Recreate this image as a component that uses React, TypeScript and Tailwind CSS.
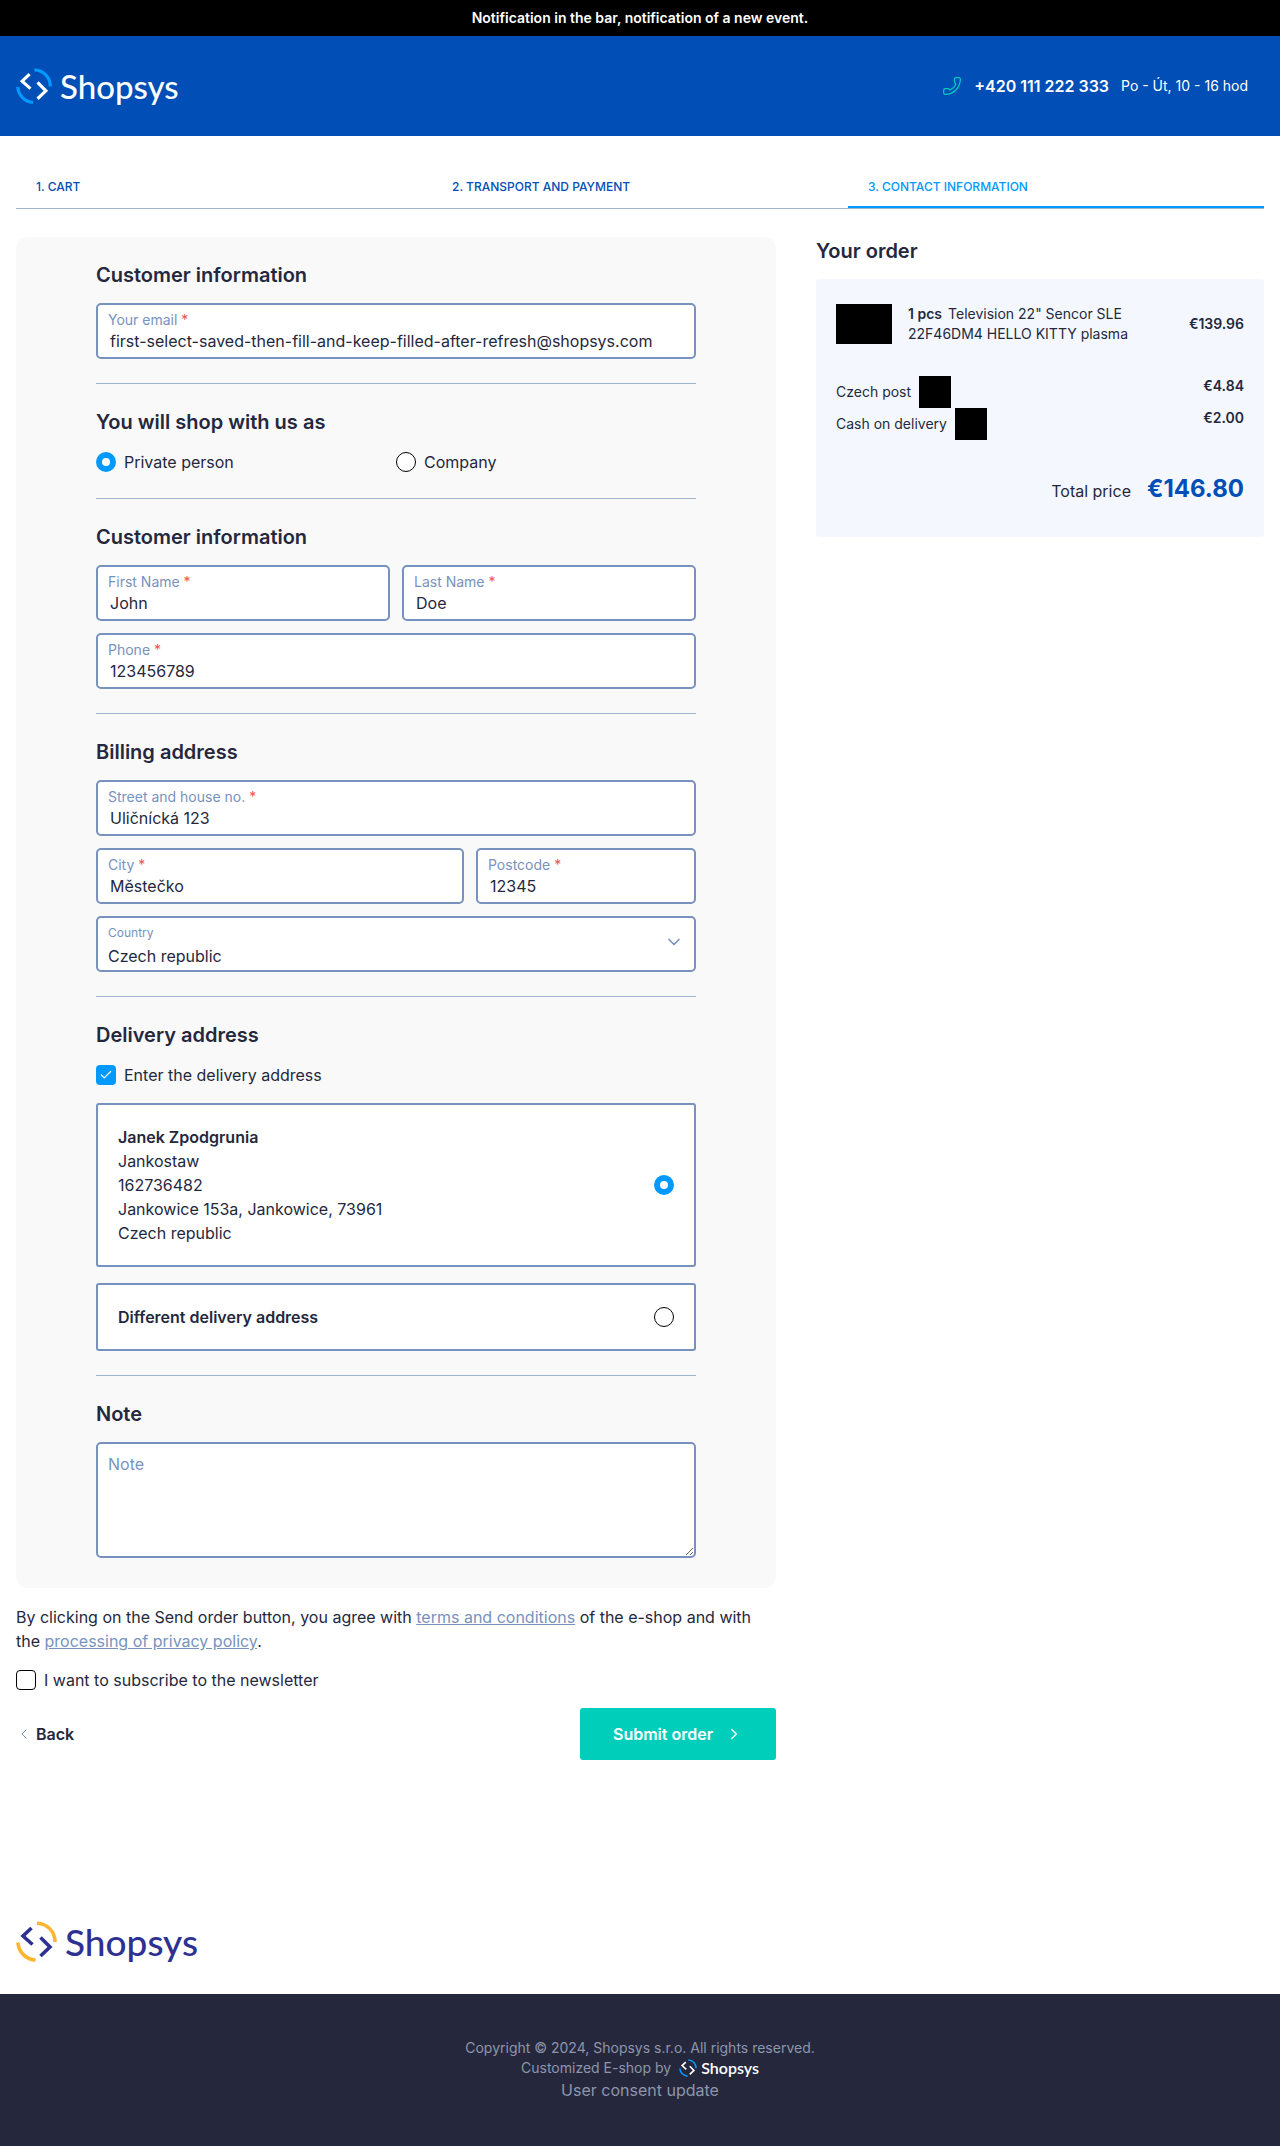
import React from 'react';
import { ChevronDown, ChevronLeft, ChevronRight, Check, Phone } from 'lucide-react';

function LogoMark({ arc, chevron, className }: { arc: string; chevron: string; className: string }) {
  return (
    <svg viewBox="0 0 41 41" fill="none" className={className}>
      <path d="M21 2.2 A18.4 18.4 0 0 1 39 21" strokeWidth="3.6" className={arc} />
      <path d="M2 21.5 A18.4 18.4 0 0 0 19.5 39" strokeWidth="3.6" className={arc} />
      <path d="M15.5 7 L7 15 L16.5 23.5" strokeWidth="3.6" className={chevron} />
      <path d="M24.5 16.5 L34 26 L24.5 35" strokeWidth="3.6" className={chevron} />
    </svg>
  );
}

function Field({ label, value, required = true, className = '' }: { label: string; value: string; required?: boolean; className?: string }) {
  return (
    <div className={`h-14 border-2 border-[#7892BE] rounded-[5px] bg-white pt-1.5 pl-2.5 ${className}`}>
      <div className="text-sm leading-[18px] text-[#7892BE]">
        {label} {required && <span className="text-[#EC5353]">*</span>}
      </div>
      <div className="pl-0.5 text-base leading-6 text-[#25283D] whitespace-nowrap">{value}</div>
    </div>
  );
}

function Radio({ checked = false }: { checked?: boolean }) {
  return checked ? (
    <span className="block w-5 h-5 shrink-0 rounded-full bg-white border-[6px] border-[#0099FF]" />
  ) : (
    <span className="block w-5 h-5 shrink-0 rounded-full bg-white border border-black" />
  );
}

function Section({ title, children, last = false }: { title: string; children: React.ReactNode; last?: boolean }) {
  return (
    <section className={last ? '' : 'pb-6 mb-6 border-b border-[#A4B4D0]'}>
      <h2 className="h-7 mb-3.5 text-xl leading-7 font-semibold text-[#25283D]">{title}</h2>
      {children}
    </section>
  );
}

export default function App() {
  return (
    <div className="font-[Inter,sans-serif] text-[#25283D] bg-white">
      <div className="h-9 bg-black flex items-center justify-center text-sm font-semibold text-white">
        Notification in the bar, notification of a new event.
      </div>

      <header className="h-[100px] bg-[#004EB6] flex items-center justify-between pl-4 pr-8">
        <div className="flex items-center gap-2">
          <LogoMark arc="stroke-[#0099FF]" chevron="stroke-white" className="w-9 h-9" />
          <span className="font-[Lato,sans-serif] font-medium text-[33px] leading-none text-white">Shopsys</span>
        </div>
        <div className="flex items-center text-white">
          <Phone size={20} strokeWidth={1.5} className="text-[#00CEBA] -scale-x-100" />
          <span className="ml-3 text-base font-semibold">+420 111 222 333</span>
          <span className="ml-3 text-sm">Po - Út, 10 - 16 hod</span>
        </div>
      </header>

      <main className="px-4">
        <div className="pt-10 grid grid-cols-3 border-b border-[#A4B4D0] text-xs font-medium uppercase">
          <div className="pl-5 h-[32px] leading-[22px] text-[#004EB6]">1. Cart</div>
          <div className="pl-5 h-[32px] leading-[22px] text-[#004EB6]">2. Transport and payment</div>
          <div className="pl-5 h-[32px] leading-[22px] text-[#0099FF] border-b-2 border-[#0099FF]">3. Contact information</div>
        </div>

        <div className="mt-7 flex gap-10 items-start">
          <div className="w-[760px] shrink-0">
            <div className="bg-[#F9F9FA] rounded-xl pt-6 pb-[30px] px-20">
              <Section title="Customer information">
                <Field label="Your email" value="first-select-saved-then-fill-and-keep-filled-after-refresh@shopsys.com" />
              </Section>

              <Section title="You will shop with us as">
                <div className="grid grid-cols-2 h-6">
                  <label className="flex items-center gap-2 text-base"><Radio checked />Private person</label>
                  <label className="flex items-center gap-2 text-base"><Radio />Company</label>
                </div>
              </Section>

              <Section title="Customer information">
                <div className="flex flex-col gap-3">
                  <div className="grid grid-cols-2 gap-3">
                    <Field label="First Name" value="John" />
                    <Field label="Last Name" value="Doe" />
                  </div>
                  <Field label="Phone" value="123456789" />
                </div>
              </Section>

              <Section title="Billing address">
                <div className="flex flex-col gap-3">
                  <Field label="Street and house no." value="Uličnícká 123" />
                  <div className="flex gap-3">
                    <Field label="City" value="Městečko" className="flex-1" />
                    <Field label="Postcode" value="12345" className="w-[220px]" />
                  </div>
                  <div className="relative h-14 border-2 border-[#7892BE] rounded-[5px] bg-white pl-2.5 pt-1.5">
                    <div className="text-xs leading-[18px] text-[#7892BE]">Country</div>
                    <div className="mt-0.5 text-base leading-6">Czech republic</div>
                    <ChevronDown size={20} strokeWidth={2} className="absolute right-2.5 top-[14px] text-[#7892BE]" />
                  </div>
                </div>
              </Section>

              <Section title="Delivery address">
                <label className="flex items-center gap-2 h-6 mb-4 text-base">
                  <span className="flex items-center justify-center w-5 h-5 rounded bg-[#0099FF]">
                    <Check size={14} strokeWidth={2} className="text-white" />
                  </span>
                  Enter the delivery address
                </label>
                <div className="flex items-center justify-between h-[164px] border-2 border-[#7892BE] rounded-[3px] bg-white px-5 mb-4">
                  <div className="text-base leading-6">
                    <div className="font-semibold">Janek Zpodgrunia</div>
                    <div>Jankostaw</div>
                    <div>162736482</div>
                    <div>Jankowice 153a, Jankowice, 73961</div>
                    <div>Czech republic</div>
                  </div>
                  <Radio checked />
                </div>
                <div className="flex items-center justify-between h-[68px] border-2 border-[#7892BE] rounded-[3px] bg-white px-5">
                  <div className="text-base font-semibold">Different delivery address</div>
                  <Radio />
                </div>
              </Section>

              <Section title="Note" last>
                <textarea
                  placeholder="Note"
                  className="block w-full h-[116px] border-2 border-[#7892BE] rounded-[5px] bg-white px-2.5 py-2 text-base leading-6 placeholder:text-[#7892BE]"
                />
              </Section>
            </div>

            <p className="mt-[17px] text-base leading-6">
              By clicking on the Send order button, you agree with{' '}
              <a className="text-[#7892BE] underline">terms and conditions</a> of the e-shop and with the{' '}
              <a className="text-[#7892BE] underline">processing of privacy policy</a>.
            </p>

            <label className="mt-[15px] flex items-center gap-2 h-6 text-base">
              <span className="block w-5 h-5 rounded border border-black bg-white" />
              I want to subscribe to the newsletter
            </label>

            <div className="mt-4 flex items-center justify-between">
              <a className="flex items-center gap-1 text-base font-semibold">
                <ChevronLeft size={16} strokeWidth={1.5} className="text-[#7892BE]" />
                Back
              </a>
              <button className="flex items-center justify-center gap-3 w-[196px] h-[52px] rounded-[3px] bg-[#00CEBA] text-base font-semibold text-white">
                Submit order
                <ChevronRight size={18} strokeWidth={2} />
              </button>
            </div>
          </div>

          <aside className="w-[448px] shrink-0">
            <h2 className="h-7 mb-3.5 text-xl leading-7 font-semibold">Your order</h2>
            <div className="h-[258px] bg-[#F4F8FE] rounded px-5 pt-[25px]">
              <div className="flex items-center">
                <div className="w-14 h-10 bg-black shrink-0" />
                <div className="ml-4 flex-1 text-sm leading-5">
                  <span className="font-semibold">1 pcs</span>
                  <span className="ml-1.5">Television 22" Sencor SLE</span>
                  <br />
                  22F46DM4 HELLO KITTY plasma
                </div>
                <div className="text-sm font-semibold">€139.96</div>
              </div>
              <div className="mt-[32px] text-sm">
                <div className="flex justify-between h-8">
                  <div className="flex items-center gap-2">Czech post<span className="block w-8 h-8 bg-black" /></div>
                  <div className="font-semibold leading-5">€4.84</div>
                </div>
                <div className="flex justify-between h-8">
                  <div className="flex items-center gap-2">Cash on delivery<span className="block w-8 h-8 bg-black" /></div>
                  <div className="font-semibold leading-5">€2.00</div>
                </div>
              </div>
              <div className="mt-[33px] flex items-center justify-end gap-4">
                <span className="text-base mt-1">Total price</span>
                <span className="text-2xl font-bold text-[#004EB6]">€146.80</span>
              </div>
            </div>
          </aside>
        </div>

        <div className="mt-40 mb-8 flex items-center gap-2 h-[42px]">
          <LogoMark arc="stroke-[#FFB52E]" chevron="stroke-[#2E3192]" className="w-[41px] h-[41px]" />
          <span className="font-[Lato,sans-serif] font-medium text-[37px] leading-none text-[#2E3192]">Shopsys</span>
        </div>
      </main>

      <footer className="h-[152px] bg-[#25283D] pt-[44px] flex flex-col items-center text-[#8F95A9]">
        <div className="text-sm leading-5">Copyright © 2024, Shopsys s.r.o. All rights reserved.</div>
        <div className="flex items-center text-sm leading-5">
          Customized E-shop by
          <LogoMark arc="stroke-[#0099FF]" chevron="stroke-white" className="w-[18px] h-[18px] ml-2" />
          <span className="ml-1 font-[Lato,sans-serif] font-semibold text-base leading-none text-white">Shopsys</span>
        </div>
        <div className="text-base leading-6">User consent update</div>
      </footer>
    </div>
  );
}
